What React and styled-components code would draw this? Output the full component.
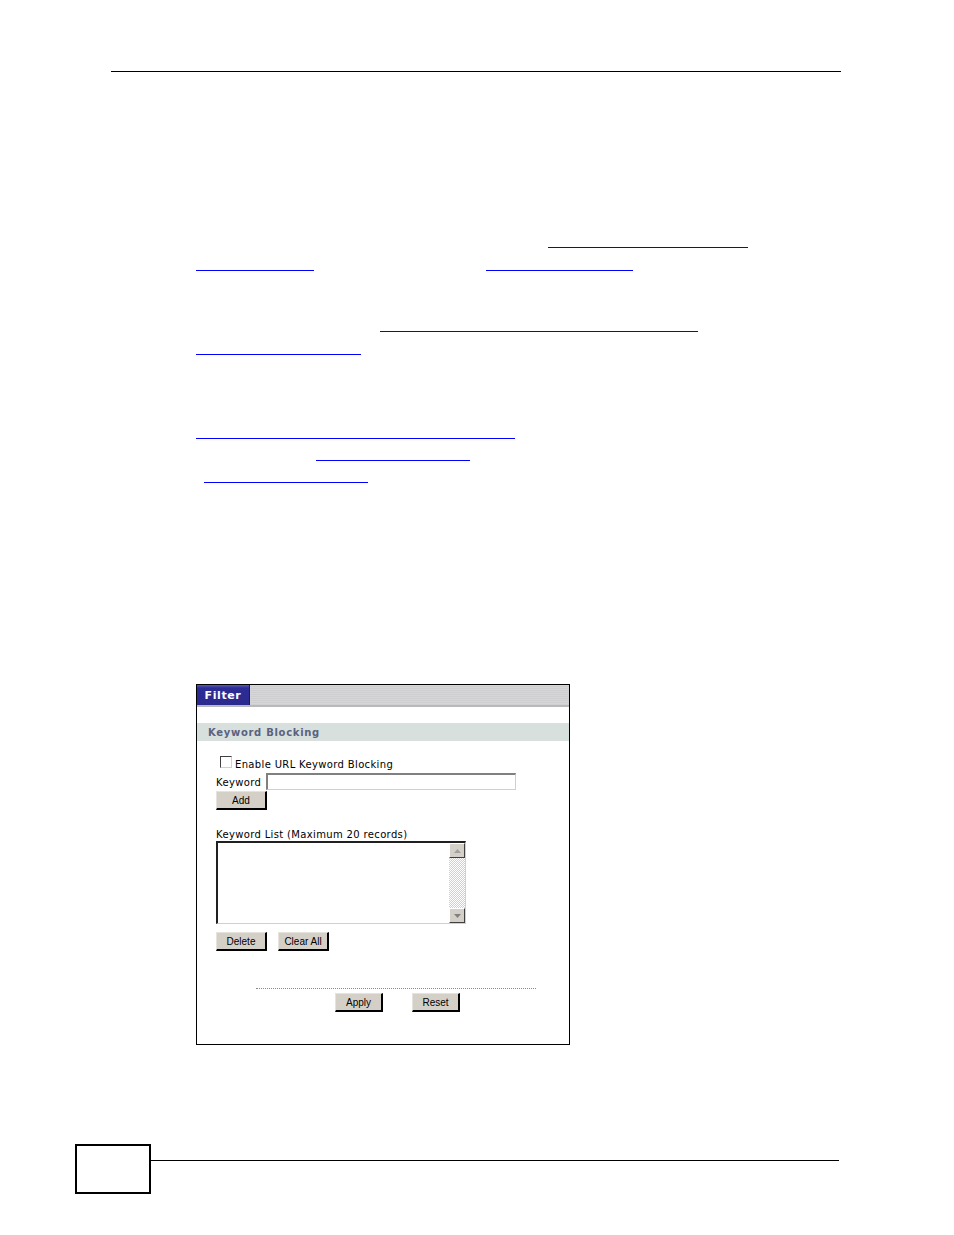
import React from "react"
import styled, { createGlobalStyle } from "styled-components"

const Global = createGlobalStyle`
  html, body {
    margin: 0;
    padding: 0;
    background: #fff;
  }
  body {
    font-family: "DejaVu Sans", Verdana, sans-serif;
  }
`

const Page = styled.div`
  width: 954px;
  height: 1235px;
  position: relative;
  overflow: hidden;
  background: #fff;
`

const HeaderRule = styled.div`
  margin: 71px 0 0 111px;
  width: 730px;
  height: 0;
  border-top: 1.5px solid #000;
`

const Body = styled.div`
  padding-left: 196px;
`

const Para = styled.div`
  margin-top: ${(p) => p.top}px;
  display: flex;
  flex-direction: column;
`

const TextLine = styled.div`
  display: flex;
  align-items: flex-end;
  height: ${(p) => p.h || 23}px;
`

const LinkRun = styled.span`
  display: block;
  margin-left: ${(p) => p.offset || 0}px;
  width: ${(p) => p.w}px;
  height: 0;
  border-bottom: 1.5px solid #0000ff;
`

const Panel = styled.div`
  margin: ${(p) => p.top}px 0 0 196px;
  width: 372px;
  height: 359px;
  border: 1px solid #000;
  background: #fff;
  font-family: "DejaVu Sans", Verdana, sans-serif;
  color: #000;
`

const TabBar = styled.div`
  display: flex;
  height: 20px;
  background: repeating-linear-gradient(
    to bottom,
    #d6d6d9 0px,
    #d6d6d9 1px,
    #cfcfd2 1px,
    #cfcfd2 2px
  );
  border-bottom: 2px solid #b9b9bc;
`

const Tab = styled.div`
  width: 52px;
  display: flex;
  align-items: center;
  justify-content: center;
  background: linear-gradient(to bottom, #5a5ab8 0px, #2c2c96 3px, #2a2a8e 100%);
  border-right: 1px solid #1a1a60;
  color: #fff;
  font-weight: bold;
  font-size: 11px;
  letter-spacing: 0.6px;
`

const SectionBar = styled.div`
  margin-top: 16px;
  height: 18px;
  background: #d8e0de;
  display: flex;
  align-items: center;
  padding-left: 11px;
  color: #5a6280;
  font-weight: bold;
  font-size: 10px;
  letter-spacing: 0.7px;
`

const Form = styled.div`
  padding: 15px 0 0 19px;
  font-size: 10px;
  letter-spacing: 0.35px;
`

const CheckRow = styled.label`
  display: flex;
  align-items: center;
  gap: 3px;
  padding-left: 4px;
  height: 16px;
`

const Box = styled.span`
  width: 10px;
  height: 10px;
  border-top: 1px solid #404040;
  border-left: 1px solid #404040;
  border-right: 1px solid #d4d0c8;
  border-bottom: 1px solid #d4d0c8;
  background: #fff;
  margin-top: -4px;
`

const FieldRow = styled.div`
  display: flex;
  align-items: center;
  gap: 5px;
  height: 18px;
  padding-top: 1px;
`

const TextInput = styled.div`
  width: 247px;
  height: 14px;
  margin-top: -2px;
  border-top: 2px solid #808080;
  border-left: 2px solid #808080;
  border-right: 1px solid #d4d0c8;
  border-bottom: 1px solid #d4d0c8;
  background: #fff;
`

const Button = styled.div`
  width: ${(p) => p.w}px;
  height: 19px;
  background: #d4d0c8;
  border-right: 2px solid #000;
  border-bottom: 2px solid #000;
  border-top: 1px solid #e6e3dd;
  border-left: 1px solid #e6e3dd;
  box-sizing: border-box;
  display: flex;
  align-items: center;
  justify-content: center;
  font-family: "Liberation Sans", Arial, sans-serif;
  font-size: 10px;
  letter-spacing: 0;
  color: #000;
`

const ButtonRow = styled.div`
  display: flex;
  gap: ${(p) => p.gap || 11}px;
  margin-top: ${(p) => p.top || 0}px;
  padding-left: ${(p) => p.indent || 0}px;
`

const ListLabel = styled.div`
  margin-top: 19px;
  height: 12px;
`

const ListBox = styled.div`
  width: 250px;
  height: 83px;
  box-sizing: border-box;
  border-top: 2px solid #202020;
  border-left: 2px solid #202020;
  border-right: 1px solid #d4d0c8;
  border-bottom: 1px solid #d4d0c8;
  display: flex;
  justify-content: flex-end;
  background: #fff;
`

const ScrollBar = styled.div`
  width: 16px;
  display: flex;
  flex-direction: column;
  background-color: #f2f1ee;
  background-image: repeating-conic-gradient(#d4d0c8 0% 25%, #ffffff 0% 50%);
  background-size: 2px 2px;
`

const ScrollBtn = styled.div`
  height: 15px;
  box-sizing: border-box;
  background: #d4d0c8;
  border-top: 1px solid #fff;
  border-left: 1px solid #fff;
  border-right: 1px solid #404040;
  border-bottom: 1px solid #404040;
  display: flex;
  align-items: center;
  justify-content: center;
  margin-top: ${(p) => (p.bottom ? "auto" : "0")};
`

const Divider = styled.div`
  margin: 37px 0 0 59px;
  width: 280px;
  border-top: 1px dotted #8a8a8a;
`

const Footer = styled.div`
  position: absolute;
  left: 75px;
  top: 1144px;
  width: 764px;
  display: flex;
  align-items: flex-start;
`

const PageBox = styled.div`
  width: 72px;
  height: 46px;
  border: 2px solid #000;
`

const FooterRule = styled.div`
  flex: 1;
  margin-top: 16px;
  border-top: 1px solid #000;
`

const Arrow = ({ down }) => (
  <svg width="7" height="4" viewBox="0 0 7 4">
    <path d={down ? "M0 0 H7 L3.5 4 Z" : "M0 4 H7 L3.5 0 Z"} fill={down ? "#808080" : "#a0a0a0"} />
  </svg>
)

export default function App() {
  return (
    <Page>
      <Global />
      <HeaderRule />
      <Body>
        <Para top={153}>
          <TextLine>
            <LinkRun offset={352} w={200} />
          </TextLine>
          <TextLine>
            <LinkRun w={118} />
            <LinkRun offset={172} w={147} />
          </TextLine>
        </Para>
        <Para top={38}>
          <TextLine>
            <LinkRun offset={184} w={318} />
          </TextLine>
          <TextLine>
            <LinkRun w={165} />
          </TextLine>
        </Para>
        <Para top={61}>
          <TextLine>
            <LinkRun w={319} />
          </TextLine>
          <TextLine h={22}>
            <LinkRun offset={120} w={154} />
          </TextLine>
          <TextLine h={22}>
            <LinkRun offset={8} w={164} />
          </TextLine>
        </Para>
      </Body>

      <Panel top={201}>
        <TabBar>
          <Tab>Filter</Tab>
        </TabBar>
        <SectionBar>Keyword Blocking</SectionBar>
        <Form>
          <CheckRow>
            <Box />
            Enable URL Keyword Blocking
          </CheckRow>
          <FieldRow>
            Keyword
            <TextInput />
          </FieldRow>
          <ButtonRow>
            <Button w={51}>Add</Button>
          </ButtonRow>
          <ListLabel>Keyword List (Maximum 20 records)</ListLabel>
          <ListBox>
            <ScrollBar>
              <ScrollBtn>
                <Arrow />
              </ScrollBtn>
              <ScrollBtn bottom>
                <Arrow down />
              </ScrollBtn>
            </ScrollBar>
          </ListBox>
          <ButtonRow top={8}>
            <Button w={51}>Delete</Button>
            <Button w={51}>Clear All</Button>
          </ButtonRow>
        </Form>
        <Divider />
        <ButtonRow gap={29} top={4} indent={138}>
          <Button w={48}>Apply</Button>
          <Button w={48}>Reset</Button>
        </ButtonRow>
      </Panel>

      <Footer>
        <PageBox />
        <FooterRule />
      </Footer>
    </Page>
  )
}
